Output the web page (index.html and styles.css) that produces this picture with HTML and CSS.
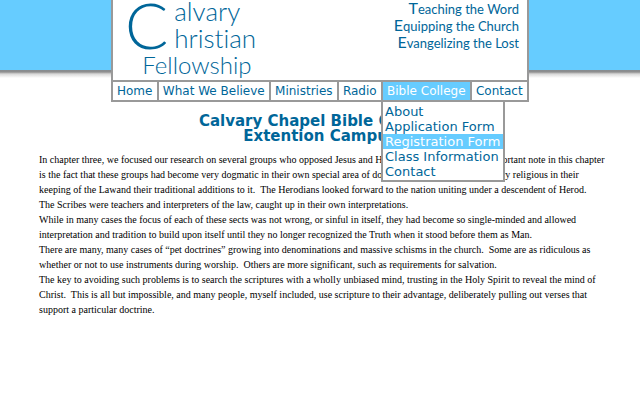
FILE: index.html
```html
<!DOCTYPE html>
<html lang="en">
<head>
<meta charset="utf-8">
<title>Calvary Christian Fellowship</title>
<link rel="stylesheet" href="styles.css">
</head>
<body>
<div class="banner">
  <header class="header">
    <div class="brand">
      <a class="logo" href="#"><span class="logo-initial">C</span><span class="logo-words"><span>alvary</span><span class="logo-middle">hristian</span><span class="logo-last">Fellowship</span></span></a>
      <div class="tagline">
        <p>Teaching the Word</p>
        <p>Equipping the Church</p>
        <p>Evangelizing the Lost</p>
      </div>
    </div>
    <nav>
      <ul class="nav">
        <li><a href="#">Home</a></li>
        <li><a href="#">What We Believe</a></li>
        <li><a href="#">Ministries</a></li>
        <li><a href="#">Radio</a></li>
        <li><a class="active" href="#">Bible College</a>
          <ul class="menu">
            <li><a href="#">About</a></li>
            <li><a href="#">Application Form</a></li>
            <li><a class="active" href="#">Registration Form</a></li>
            <li><a href="#">Class Information</a></li>
            <li><a href="#">Contact</a></li>
          </ul>
        </li>
        <li><a href="#">Contact</a></li>
      </ul>
    </nav>
  </header>
</div>
<main class="content">
  <h1>Calvary Chapel Bible College<br>Extention Campus</h1>
  <p>In chapter three, we focused our research on several groups who opposed Jesus and His ministry.&nbsp; Another very important note in this chapter is the fact that these groups had become very dogmatic in their own special area of doctrine.&nbsp; The Pharisees were very religious in their keeping of the Lawand their traditional additions to it.&nbsp; The Herodians looked forward to the nation uniting under a descendent of Herod.</p>
  <p>The Scribes were teachers and interpreters of the law, caught up in their own interpretations.</p>
  <p>While in many cases the focus of each of these sects was not wrong, or sinful in itself, they had become so single-minded and allowed interpretation and tradition to build upon itself until they no longer recognized the Truth when it stood before them as Man.</p>
  <p>There are many, many cases of “pet doctrines” growing into denominations and massive schisms in the church.&nbsp; Some are as ridiculous as whether or not to use instruments during worship.&nbsp; Others are more significant, such as requirements for salvation.</p>
  <p>The key to avoiding such problems is to search the scriptures with a wholly unbiased mind, trusting in the Holy Spirit to reveal the mind of Christ.&nbsp; This is all but impossible, and many people, myself included, use scripture to their advantage, deliberately pulling out verses that support a particular doctrine.</p>
</main>
</body>
</html>
```
FILE: styles.css
```css
* {
  box-sizing: border-box;
}

body {
  margin: 0;
  background: #fff;
  color: #000;
  font-family: "Liberation Serif", serif;
}

p, h1, ul {
  margin: 0;
  padding: 0;
}

ul {
  list-style: none;
}

a {
  color: #006699;
  text-decoration: none;
}

.banner {
  display: flex;
  justify-content: center;
  background: linear-gradient(#66ccff 70px, #858b90 70px, #8f8f8f 72px, #d8d8d8 74px, #fff 78px);
}

.header {
  min-width: 418px;
  border: solid #999;
  border-width: 0 2px;
  background: #fff;
}

.brand {
  display: flex;
  justify-content: space-between;
  height: 80px;
  padding: 0 8px 0 12px;
  color: #006699;
  font-family: Lato, sans-serif;
}

.logo {
  display: flex;
  font-variant-ligatures: none;
  font-weight: 300;
}

.logo-initial {
  font-size: 64px;
  line-height: 50px;
}

.logo-words {
  display: flex;
  flex-direction: column;
  padding-left: 6px;
  font-size: 26px;
  line-height: 22px;
}

.logo-middle {
  line-height: 32px;
}

.logo-last {
  margin-left: -32px;
  font-size: 24px;
}

.tagline {
  padding-top: 1px;
  font-size: 13px;
  line-height: 17px;
  text-align: right;
}

.tagline p::first-letter {
  font-size: 16px;
  line-height: 12px;
}

.nav {
  display: flex;
  border: solid #999;
  border-width: 2px 0;
  font: 12px/18px "DejaVu Sans", sans-serif;
}

.nav > li {
  position: relative;
  flex: auto;
}

.nav > li + li {
  border-left: 2px solid #999;
}

.nav a {
  display: block;
  padding: 0 4px;
  white-space: nowrap;
}

.nav a.active {
  background: #66ccff;
  color: #fff;
}

.menu {
  position: absolute;
  top: 100%;
  left: -2px;
  min-width: 124px;
  padding: 2px 0 1px;
  border: 2px solid #999;
  background: #fff;
  font-size: 13px;
  line-height: 15px;
}

.menu a {
  padding: 0 2px;
}

.content {
  padding: 12px 30px 0;
  font-size: 10px;
  line-height: 15px;
}

.content h1 {
  margin-bottom: 8px;
  color: #006699;
  font: bold 15px/15px "DejaVu Sans", sans-serif;
  text-align: center;
}

.content p {
  padding-left: 9px;
}
```
